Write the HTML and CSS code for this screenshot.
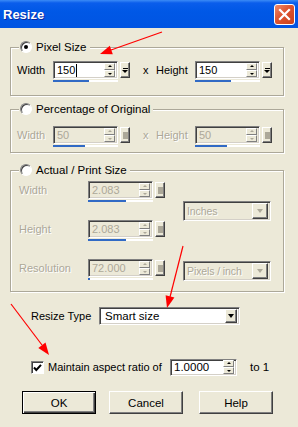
FILE: index.html
```html
<!DOCTYPE html>
<html>
<head>
<meta charset="utf-8">
<link rel="stylesheet" href="styles.css">
</head>
<body>
<div class="titlebar">
  <span class="title">Resize</span>
  <span class="close"><svg width="13" height="13" viewBox="0 0 13 13"><path d="M2 2L11 11M11 2L2 11" stroke="#fff" stroke-width="2.2" stroke-linecap="square"/></svg></span>
</div>

<fieldset class="group g1">
  <legend><span class="radio on"></span>Pixel Size</legend>
  <div class="row">
    <span class="lbl lbl-w">Width</span>
    <div class="num">
      <div class="numtop">
        <div class="field"><span class="val">150</span><span class="caret"></span><span class="spin"><b class="up"></b><b class="dn"></b></span></div>
        <span class="menu"><i class="bar"></i><i class="tri"></i></span>
      </div>
      <div class="track"><i style="width:36px"></i></div>
    </div>
    <span class="xsep">x</span>
    <span class="lbl lbl-h">Height</span>
    <div class="num">
      <div class="numtop">
        <div class="field"><span class="val">150</span><span class="spin"><b class="up"></b><b class="dn"></b></span></div>
        <span class="menu"><i class="bar"></i><i class="tri"></i></span>
      </div>
      <div class="track"><i style="width:36px"></i></div>
    </div>
  </div>
</fieldset>

<fieldset class="group g2">
  <legend><span class="radio"></span>Percentage of Original</legend>
  <div class="row dis">
    <span class="lbl lbl-w">Width</span>
    <div class="num">
      <div class="numtop">
        <div class="field"><span class="val">50</span><span class="spin"><b class="up"></b><b class="dn"></b></span></div>
        <span class="menu"><i class="sq"></i></span>
      </div>
      <div class="track"><i style="width:32px"></i></div>
    </div>
    <span class="xsep">x</span>
    <span class="lbl lbl-h">Height</span>
    <div class="num">
      <div class="numtop">
        <div class="field"><span class="val">50</span><span class="spin"><b class="up"></b><b class="dn"></b></span></div>
        <span class="menu"><i class="sq"></i></span>
      </div>
      <div class="track"><i style="width:32px"></i></div>
    </div>
  </div>
</fieldset>

<fieldset class="group g3">
  <legend><span class="radio"></span>Actual / Print Size</legend>
  <div class="grid dis">
    <span class="lbl glbl r1">Width</span>
    <div class="num r1">
      <div class="numtop">
        <div class="field"><span class="val">2.083</span><span class="spin"><b class="up"></b><b class="dn"></b></span></div>
        <span class="menu"><i class="sq"></i></span>
      </div>
      <div class="track"><i style="width:38px"></i></div>
    </div>
    <div class="combo dcombo units"><span class="ctext">Inches</span><span class="cbtn"><i></i></span></div>

    <span class="lbl glbl r2">Height</span>
    <div class="num r2">
      <div class="numtop">
        <div class="field"><span class="val">2.083</span><span class="spin"><b class="up"></b><b class="dn"></b></span></div>
        <span class="menu"><i class="sq"></i></span>
      </div>
      <div class="track"><i style="width:38px"></i></div>
    </div>

    <span class="lbl glbl r3">Resolution</span>
    <div class="num r3">
      <div class="numtop">
        <div class="field"><span class="val">72.000</span><span class="spin"><b class="up"></b><b class="dn"></b></span></div>
        <span class="menu"><i class="sq"></i></span>
      </div>
      <div class="track"><i style="width:2px"></i></div>
    </div>
    <div class="combo dcombo res"><span class="ctext">Pixels / inch</span><span class="cbtn"><i></i></span></div>
  </div>
</fieldset>

<div class="typerow">
  <span class="lbl typelbl">Resize Type</span>
  <div class="combo wcombo"><span class="ctext">Smart size</span><span class="cbtn"><i></i></span></div>
</div>

<div class="aspectrow">
  <span class="check"><svg width="9" height="9" viewBox="0 0 9 9"><path d="M1 4.5L3.3 7L8 1.8" stroke="#000" stroke-width="2" fill="none"/></svg></span>
  <span class="lbl aspectlbl">Maintain aspect ratio of</span>
  <div class="field ratio"><span class="val">1.0000</span><span class="spin"><b class="up"></b><b class="dn"></b></span></div>
  <span class="lbl tolbl">to 1</span>
</div>

<div class="buttons">
  <span class="btn default">OK</span>
  <span class="btn">Cancel</span>
  <span class="btn help">Help</span>
</div>

<svg class="arrows" width="298" height="427" viewBox="0 0 298 427">
  <line x1="162" y1="32" x2="111" y2="50" stroke="#f00" stroke-width="1.2"/>
  <polygon points="100,54 112.8,54.2 109.8,45.8" fill="#f00"/>
  <line x1="183" y1="246" x2="170" y2="297" stroke="#f00" stroke-width="1.2"/>
  <polygon points="167,308 174.4,297.5 165.6,295.3" fill="#f00"/>
  <line x1="11" y1="304" x2="42" y2="345" stroke="#f00" stroke-width="1.2"/>
  <polygon points="49,355 45.5,342.6 38.3,348" fill="#f00"/>
</svg>
</body>
</html>
```
FILE: styles.css
```css
html, body {
  margin: 0;
  padding: 0;
}
body {
  width: 298px;
  height: 427px;
  overflow: hidden;
  position: relative;
  background: #ECE9D8;
  font-family: "Liberation Sans", Arial, sans-serif;
  font-size: 11px;
  color: #000;
}

.titlebar {
  height: 28px;
  box-sizing: border-box;
  display: flex;
  align-items: center;
  justify-content: space-between;
  padding: 0 3px 0 3px;
  background: linear-gradient(#3B8BF6 0, #0A5DEB 3px, #0058E6 40%, #0054E2 100%);
}
.title {
  color: #fff;
  font-weight: bold;
  font-size: 13px;
  text-shadow: 1px 1px #0A2A9F;
}
.close {
  width: 21px;
  height: 21px;
  box-sizing: border-box;
  border: 1px solid #fff;
  border-radius: 3px;
  background: linear-gradient(135deg, #F08B6B 0%, #DE5430 45%, #C9411B 100%);
  display: flex;
  align-items: center;
  justify-content: center;
  margin-top: 1px;
}
.close svg { display: block; }

/* group boxes */
.group {
  margin: 0 14px 0 10px;
  border: 1px solid #ACA899;
  box-shadow: inset 1px 1px #fff, 1px 1px #fff;
  min-width: 0;
}
.g1 { margin-top: 12px; padding: 7px 6px 13px 6px; }
.g2 { margin-top: 6px; padding: 10px 6px 5px 6px; }
.g3 { margin-top: 10px; padding: 4px 6px 11px 6px; }

legend {
  margin-left: 2px;
  padding: 0 3px 0 1px;
  height: 14px;
  line-height: 14px;
  display: flex;
  align-items: center;
  background: #ECE9D8;
  font-size: 11.5px;
}

.radio {
  width: 12px;
  height: 12px;
  box-sizing: border-box;
  border-radius: 50%;
  border: 1px solid;
  border-color: #808080 #fff #fff #808080;
  box-shadow: inset 1px 1px #404040;
  background: #fff;
  margin-right: 4px;
  position: relative;
  flex: none;
}
.radio.on::after {
  content: "";
  position: absolute;
  left: 3px;
  top: 3px;
  width: 4px;
  height: 4px;
  border-radius: 50%;
  background: #000;
}

.row {
  display: flex;
  align-items: flex-start;
}
.lbl {
  line-height: 18px;
  white-space: nowrap;
}
.lbl-w { width: 36px; }
.xsep { width: 13px; margin-left: 13px; line-height: 18px; }
.lbl-h { width: 39px; }

/* numeric control */
.num {
  display: flex;
  flex-direction: column;
}
.numtop {
  display: flex;
  height: 18px;
}
.field {
  width: 65px;
  height: 18px;
  box-sizing: border-box;
  border: 1px solid;
  border-color: #808080 #fff #fff #808080;
  box-shadow: inset 1px 1px #404040, inset -1px -1px #D4D0C8;
  background: #fff;
  display: flex;
  align-items: center;
  padding: 2px 2px 2px 2px;
}
.val {
  padding-left: 1px;
  line-height: 13px;
}
.caret {
  width: 1px;
  height: 13px;
  background: #000;
  margin-left: 1px;
}
.spin {
  margin-left: auto;
  width: 11px;
  height: 14px;
  display: flex;
  flex-direction: column;
  flex: none;
}
.spin b {
  flex: 1;
  box-sizing: border-box;
  background: #ECE9D8;
  border: 1px solid;
  border-color: #fff #808080 #808080 #fff;
  position: relative;
}
.spin b::after {
  content: "";
  position: absolute;
  left: 3px;
  width: 0;
  height: 0;
  border-left: 2px solid transparent;
  border-right: 2px solid transparent;
}
.spin .up::after { top: 1px; border-bottom: 2px solid #000; }
.spin .dn::after { top: 2px; border-top: 2px solid #000; }

.menu {
  width: 10px;
  height: 16px;
  margin: 1px 0 0 2px;
  box-sizing: border-box;
  background: #ECE9D8;
  border: 1px solid;
  border-color: #fff #404040 #404040 #fff;
  box-shadow: inset -1px -1px #808080;
  display: flex;
  flex-direction: column;
  align-items: center;
  justify-content: center;
}
.menu .bar {
  width: 5px;
  height: 1px;
  background: #000;
  margin-bottom: 1px;
}
.menu .tri {
  width: 0;
  height: 0;
  border-left: 3px solid transparent;
  border-right: 3px solid transparent;
  border-top: 3px solid #000;
}
.menu .sq {
  width: 5px;
  height: 7px;
  background: #ACA899;
}

.track {
  width: 65px;
  height: 2px;
  margin-top: 1px;
  background: #fff;
}
.track i {
  display: block;
  height: 2px;
  background: #316AC5;
}

/* disabled */
.dis .lbl, .dis .xsep {
  color: #ACA899;
  text-shadow: 1px 1px #fff;
}
.dis .field {
  background: #ECE9D8;
}
.dis .val { color: #ACA899; }
.dis .spin .up::after { border-bottom-color: #ACA899; }
.dis .spin .dn::after { border-top-color: #ACA899; }

/* group 3 grid */
.grid {
  display: grid;
  grid-template-columns: 71px 95px 88px;
  grid-template-rows: 21px 21px 21px;
  row-gap: 18px;
}
.glbl { padding-left: 2px; }
.r1 { grid-row: 1; }
.r2 { grid-row: 2; }
.r3 { grid-row: 3; }
.glbl.r1, .glbl.r2, .glbl.r3 { grid-column: 1; }
.num.r1, .num.r2, .num.r3 { grid-column: 2; }
.units { grid-column: 3; grid-row: 1 / 3; align-self: center; }
.res { grid-column: 3; grid-row: 3; align-self: center; margin-top: 2px; }

/* combos */
.combo {
  box-sizing: border-box;
  border: 1px solid;
  border-color: #808080 #fff #fff #808080;
  box-shadow: inset 1px 1px #404040, inset -1px -1px #D4D0C8;
  display: flex;
  align-items: center;
  padding: 2px;
}
.ctext {
  flex: 1;
  padding-left: 3px;
  white-space: nowrap;
  overflow: hidden;
}
.cbtn {
  width: 16px;
  height: 16px;
  box-sizing: border-box;
  background: #ECE9D8;
  border: 1px solid;
  border-color: #fff #404040 #404040 #fff;
  box-shadow: inset -1px -1px #808080;
  display: flex;
  align-items: center;
  justify-content: center;
  flex: none;
}
.cbtn i {
  width: 0;
  height: 0;
  border-left: 3.5px solid transparent;
  border-right: 3.5px solid transparent;
  border-top: 4px solid #000;
}
.dcombo {
  width: 88px;
  height: 20px;
  background: #ECE9D8;
}
.dcombo .ctext {
  color: #ACA899;
  text-shadow: 1px 1px #fff;
  padding-left: 1px;
  font-size: 10.5px;
  letter-spacing: -0.1px;
}
.dcombo .cbtn i { border-top-color: #ACA899; }

.typerow {
  display: flex;
  align-items: center;
  margin-top: 15px;
  padding-left: 31px;
  height: 18px;
}
.typelbl { width: 68px; }
.wcombo {
  width: 141px;
  height: 18px;
  background: #fff;
}
.wcombo .ctext { font-size: 11.5px; }
.wcombo .cbtn { width: 12px; height: 14px; }

.aspectrow {
  display: flex;
  align-items: center;
  margin-top: 34px;
  padding-left: 31px;
  height: 16px;
}
.check {
  width: 13px;
  height: 13px;
  box-sizing: border-box;
  border: 1px solid;
  border-color: #808080 #fff #fff #808080;
  box-shadow: inset 1px 1px #404040;
  background: #fff;
  display: flex;
  align-items: center;
  justify-content: center;
  flex: none;
}
.check svg { display: block; }
.aspectlbl {
  margin-left: 4px;
  width: 122px;
}
.field.ratio {
  width: 67px;
  height: 17px;
}
.ratio .val { font-size: 11.5px; }
.tolbl {
  margin-left: 13px;
  font-size: 11.5px;
}

.buttons {
  display: flex;
  margin-top: 16px;
  padding-left: 22px;
  gap: 13px;
}
.btn {
  width: 74px;
  height: 23px;
  box-sizing: border-box;
  border: 1px solid;
  border-color: #fff #404040 #404040 #fff;
  box-shadow: inset -1px -1px #808080;
  background: #ECE9D8;
  display: flex;
  align-items: center;
  justify-content: center;
  font-size: 11.5px;
}
.btn.default {
  border: 1px solid #000;
  box-shadow: inset 1px 1px #fff, inset -1px -1px #404040, inset -2px -2px #808080;
}
.btn.help { margin-left: 3px; }

.arrows {
  position: absolute;
  left: 0;
  top: 0;
  pointer-events: none;
}
```
